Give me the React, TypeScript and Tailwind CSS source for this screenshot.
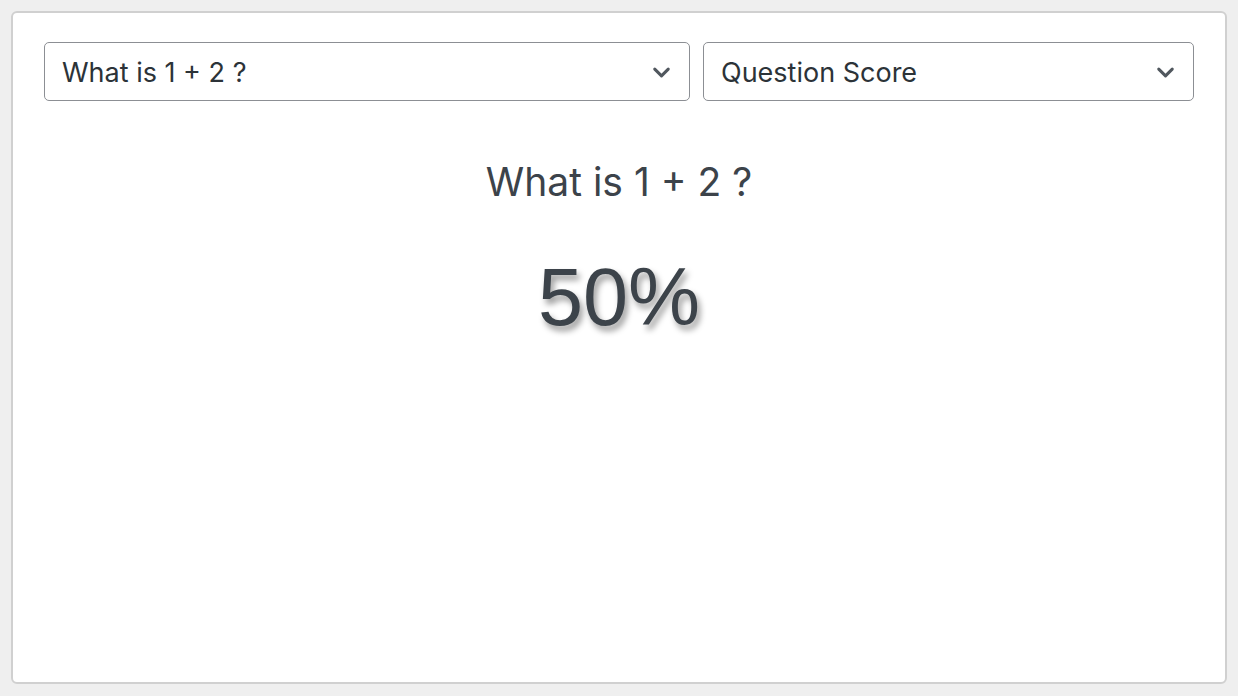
import { ChevronDown } from 'lucide-react';

function Select({ label, className }: { label: string; className?: string }) {
  return (
    <div className={`flex h-[59px] items-center justify-between rounded-[5px] border-[1.5px] border-[#8c8f94] bg-white pl-[17px] pr-[14px] ${className ?? ''}`}>
      <span className="mt-[3px] text-[27px] text-[#2c3338]">{label}</span>
      <ChevronDown className="mt-[1px] h-[27px] w-[27px] text-[#50575e]" strokeWidth={2.7} />
    </div>
  );
}

export default function App() {
  return (
    <div className="h-[696px] w-[1238px] bg-[#efefef] p-[11px] font-['Inter',sans-serif]">
      <div className="flex h-[673px] w-[1216px] flex-col rounded-[6px] border-2 border-[#d0d0d0] bg-white px-[31px] pt-[29px]">
        <div className="flex gap-[13px]">
          <Select label="What is 1 + 2 ?" className="w-[646px]" />
          <Select label="Question Score" className="w-[491px]" />
        </div>
        <div className="mt-[57px] text-center text-[39px] leading-[48px] text-[#3c434a]">What is 1 + 2 ?</div>
        <div className="mt-[46px] text-center font-['Liberation_Sans',Arial,sans-serif] text-[81px] leading-[90px] text-[#3c434a] [text-shadow:3px_5px_6px_rgba(0,0,0,0.4)]">50%</div>
      </div>
    </div>
  );
}
